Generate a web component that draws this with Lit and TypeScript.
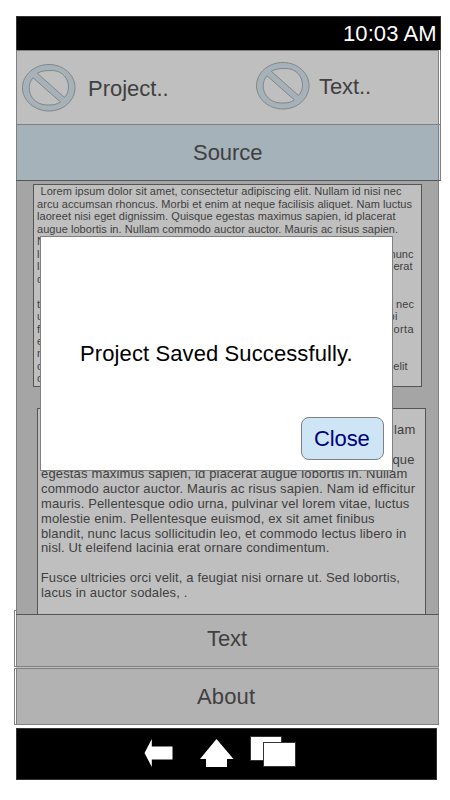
import { LitElement, html, css, svg } from "lit";
import { customElement } from "lit/decorators.js";
import { styleMap } from "lit/directives/style-map.js";

const FAMILY = '"Liberation Sans", Arial, sans-serif';
const pen = document.createElement("canvas").getContext("2d")!;

/** One line of text, tracked so that its ink covers `width` pixels. */
function fitted(text: string, size: number, width: number, indent = 0) {
  if (!text) return html`<div class="line"></div>`;
  pen.font = `${size}px ${FAMILY}`;
  const m = pen.measureText(text);
  const ink = m.actualBoundingBoxLeft + m.actualBoundingBoxRight;
  const style = {
    letterSpacing: `${((width - ink) / (text.length - 1)).toFixed(3)}px`,
    marginLeft: `${(m.actualBoundingBoxLeft + indent).toFixed(2)}px`,
  };
  return html`<div class="line" style=${styleMap(style)}>${text}</div>`;
}

type Line = [string, number, number?];

const SOURCE: Line[] = [
  ["Lorem ipsum dolor sit amet, consectetur adipiscing elit. Nullam id nisi nec", 361.5, 3.5],
  ["arcu accumsan rhoncus. Morbi et enim at neque facilisis aliquet. Nam luctus", 375.5],
  ["laoreet nisi eget dignissim. Quisque egestas maximus sapien, id placerat", 358.5],
  ["augue lobortis in. Nullam commodo auctor auctor. Mauris ac risus sapien.", 361],
  ["Nam id efficitur mauris. Pellentesque odio urna, pulvinar vel lorem vitae,", 350],
  ["luctus molestie enim. Pellentesque euismod, ex sit amet finibus blandit, nunc", 377],
  ["lacus sollicitudin leo, et commodo lectus libero in nisl. Ut eleifend lacinia erat", 375.5],
  ["ornare condimentum.", 98],
  ["", 0],
  ["tortor fusce ultricies orci velit, a feugiat nisi ornare ut. Sed lobortis lacus nec", 377.5],
  ["ut auctor sodales, lectus libero commodo leo, et rhoncus sapien morbi", 360],
  ["facilisis aliquet, nam luctus laoreet nisi eget dignissim quisque, id porta", 377.5],
  ["egestas maximus sapien, id placerat augue lobortis in.", 270],
  ["nullam commodo auctor auctor. Mauris ac risus.", 240],
  ["condimentum lacinia, ex sit amet finibus blandit, consectetur adipiscing elit", 370.5],
  ["consectetur sodales.", 98],
];

const TRANSLATION: Line[] = [
  ["Lorem ipsum dolor sit amet, consectetur adipiscing elit. Nullam", 373.5],
  ["id nisi nec arcu accumsan rhoncus. Morbi et enim at neque", 345],
  ["facilisis aliquet. Nam luctus laoreet nisi eget dignissim. Quisque", 373.2],
  ["egestas maximus sapien, id placerat augue lobortis in. Nullam", 365.5],
  ["commodo auctor auctor. Mauris ac risus sapien. Nam id efficitur", 374.7],
  ["mauris. Pellentesque odio urna, pulvinar vel lorem vitae, luctus", 368.8],
  ["molestie enim. Pellentesque euismod, ex sit amet finibus", 334],
  ["blandit, nunc lacus sollicitudin leo, et commodo lectus libero in", 365],
  ["nisl. Ut eleifend lacinia erat ornare condimentum.", 287.7],
  ["", 0],
  ["Fusce ultricies orci velit, a feugiat nisi ornare ut. Sed lobortis,", 357.7, 0.7],
  ["lacus in auctor sodales, .", 145.7],
];

const prohibited = html`<svg class="ban" width="54" height="48" viewBox="0 0 54 48">
  ${svg`<path fill-rule="evenodd" fill="#a5b2ba" stroke="#858585" stroke-width="1"
    d="M27 .5C41.600 .5 53 11 53 23.700S41.600 47 27 47S.5 36.500 .5 23.700S12.400 .5 27 .5Z
       M15.300 9.300L42.500 33.500C47.800 28 48 18 42.300 11.800C38 7.500 34 6.500 29 6.500C23.500 6.500 19 7 15.300 9.300Z
       M11 13.800C6 19.500 6 28 10.500 34C15 39.500 20 41 27 41C31.500 41 35 40.500 38.300 37.800Z"/>`}
</svg>`;

@customElement("app-root")
export class AppRoot extends LitElement {
  static styles = css`
    :host {
      display: block;
      position: relative;
      box-sizing: border-box;
      width: 450px;
      height: 800px;
      padding: 16px 0 0 16px;
      overflow: hidden;
      background: #fff;
      font-family: "Liberation Sans", Arial, sans-serif;
      font-size: 22px;
      line-height: 26px;
      color: #404040;
    }
    * { box-sizing: border-box; }
    .line { white-space: pre; height: 1lh; }
    .status {
      width: 425px;
      height: 34px;
      padding: 4px 5px 0 327px;
      background: #000;
      border: 1px solid #333;
      border-bottom: 0;
      color: #fff;
    }
    .edge { width: 425px; border-right: 1px solid #808080; }
    .header {
      display: flex;
      width: 423px;
      height: 74px;
      border: 1px solid #808080;
      border-bottom: 0;
      background: #bfbfbf;
    }
    .ban { display: block; flex: none; }
    .project { display: flex; gap: 13px; width: 234px; padding: 13px 0 0 5px; }
    .text { display: flex; gap: 9px; padding: 11px 0 0 5px; }
    .label { padding-top: 12px; }
    .edge.blue {
      height: 57px;
      background: #cde5f4;
      border-top: 1px solid #808080;
      border-bottom: 1px solid #555;
    }
    .tab {
      width: 423px;
      height: 55px;
      padding: 15px 0 0 177px;
      background: #a5b2ba;
      border-left: 1px solid #808080;
      border-right: 1px solid #808080;
    }
    .body {
      width: 423px;
      height: 433px;
      padding-top: 3px;
      background: #a5a5a5;
      border-left: 1px solid #808080;
      border-right: 1px solid #808080;
    }
    .sheet { width: 389px; background: #bfbfbf; border: 1px solid #555; overflow: hidden; }
    .first {
      height: 203px;
      margin-left: 16px;
      padding: 0.4px 0 0 3px;
      font-size: 11px;
      line-height: 12.47px;
    }
    .second {
      height: 206px;
      margin: 21px 0 0 20px;
      padding: 14px 0 0 3px;
      border-bottom: 0;
      font-size: 13px;
      line-height: 14.8px;
    }
    .row {
      width: 425px;
      margin-left: -2px;
      border: 1px solid #808080;
      padding-left: 1px;
      background: linear-gradient(90deg, #fff 1px, #b2b2b2 1px);
    }
    .cell { border-left: 1px solid #808080; }
    .lower { height: 53px; border-top: 1px solid #555; }
    .lower .cell { height: 51px; padding: 11px 0 0 190px; }
    .tail {
      position: absolute;
      left: 14px;
      top: 610px;
      width: 2px;
      height: 5px;
      border: 1px solid #808080;
      border-width: 1px 0 0 1px;
      background: #fff;
    }
    .gap { width: 423px; height: 1px; background: #bfbfbf; }
    .about { height: 57px; }
    .about .cell { height: 55px; padding: 15px 0 0 180px; }
    .nav {
      display: flex;
      width: 421px;
      height: 52px;
      margin-top: 3px;
      background: #000;
      border: 1px solid #333;
    }
    .glyphs { display: block; margin: 6px 0 0 126px; }
    .dialog {
      position: absolute;
      left: 40px;
      top: 236px;
      width: 353px;
      height: 235px;
      padding: 104px 8px 10px 39.5px;
      display: flex;
      flex-direction: column;
      justify-content: space-between;
      background: #fff;
      border: 1px solid #808080;
      color: #000;
    }
    .close {
      align-self: flex-end;
      width: 83px;
      height: 43px;
      padding: 0 0 0 13px;
      border: 1px solid #808080;
      border-radius: 8px;
      background: #cde5f4;
      color: #000080;
      font: inherit;
      text-align: left;
    }
  `;

  render() {
    return html`
      <div class="status">${fitted("10:03 AM", 22, 92.5)}</div>
      <div class="edge">
        <div class="header">
          <div class="project">${prohibited}<div class="label">${fitted("Project..", 22, 78.5)}</div></div>
          <div class="text">${prohibited}<div class="label">${fitted("Text..", 22, 51)}</div></div>
        </div>
      </div>
      <div class="edge blue"><div class="tab">${fitted("Source", 22, 68.3)}</div></div>
      <div class="body">
        <div class="sheet first">${SOURCE.map(([t, w, i]) => fitted(t, 11, w, i))}</div>
        <div class="sheet second">${TRANSLATION.map(([t, w, i]) => fitted(t, 13, w, i))}</div>
      </div>
      <div class="row lower"><div class="cell">${fitted("Text", 22, 40)}</div></div>
      <div class="gap"></div>
      <div class="row about"><div class="cell">${fitted("About", 22, 58)}</div></div>
      <div class="nav">
        <svg class="glyphs" width="156" height="36" viewBox="143 735 156 36">
          <path fill="#fff" d="M144.500 753L151.800 739V746.500H172.500V759.500H151.800V767Z" />
          <path fill="#fff" d="M216.500 739L233.500 759H227V767H206V759H200Z" />
          <g fill="#fff" stroke="#333" stroke-width="1">
            <rect x="250.500" y="736.500" width="31" height="24" />
            <rect x="263.500" y="742.500" width="32" height="24" />
          </g>
        </svg>
      </div>
      <div class="tail"></div>
      <div class="dialog">
        ${fitted("Project Saved Successfully.", 22, 270.5, 0.5)}
        <button class="close">${fitted("Close", 22, 54.5)}</button>
      </div>
    `;
  }
}
